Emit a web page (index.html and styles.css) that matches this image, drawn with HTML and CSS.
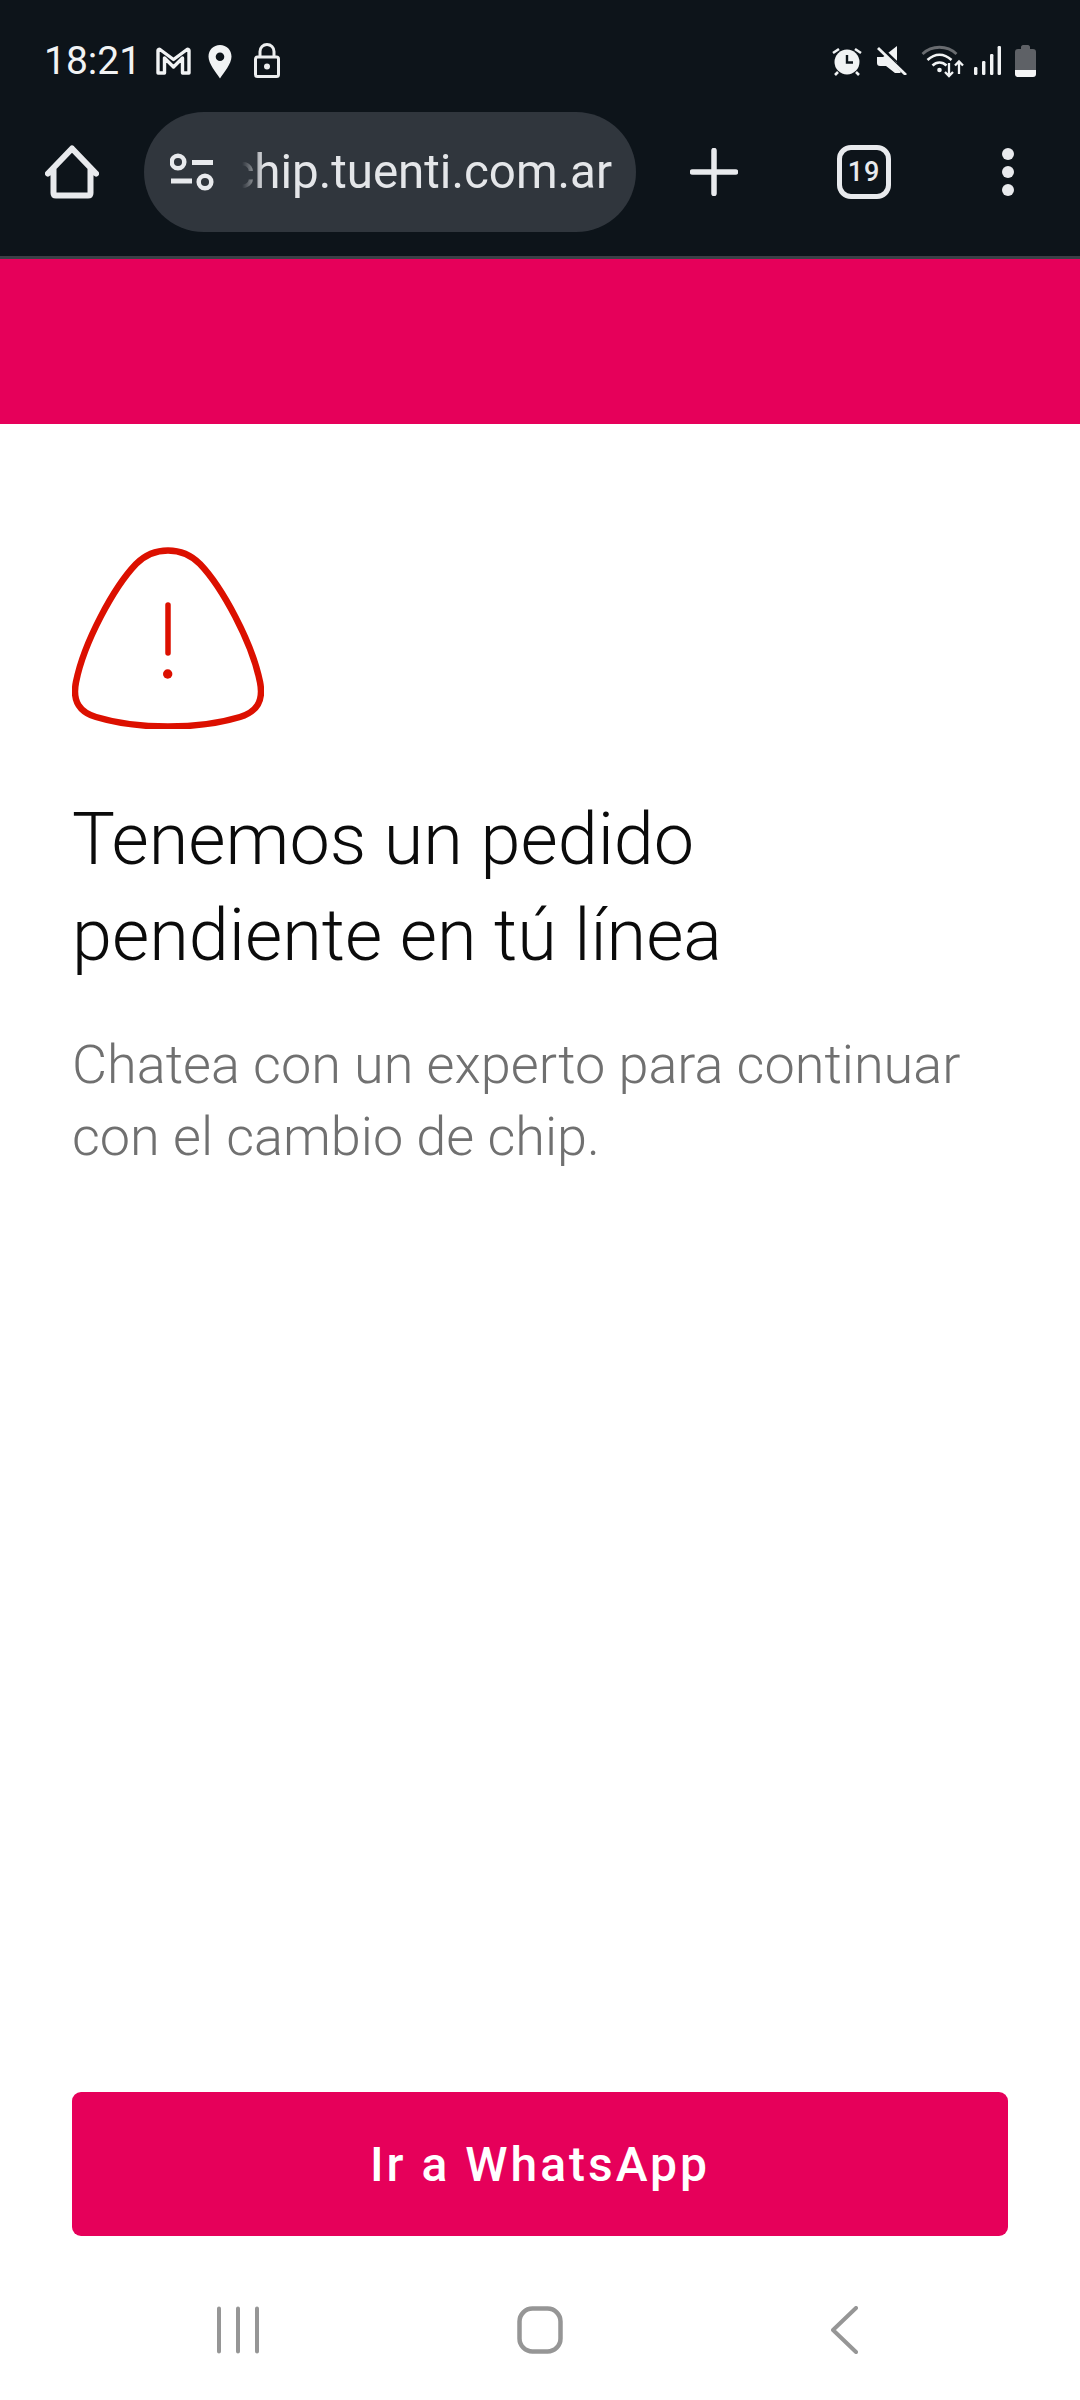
FILE: index.html
```html
<!DOCTYPE html>
<html lang="es">
<head>
<meta charset="utf-8">
<title>Tuenti</title>
<link rel="stylesheet" href="styles.css">
</head>
<body>
<div class="screen">
  <header class="browser">
    <div class="status">
      <div class="status-left">
        <span class="time">18:21</span>
        <svg class="ic-gmail" viewBox="0 0 35 28"><path d="M2 26V3.500c0-1 1-1.600 2-1l13.500 10 13.500-10c1-.6 2 0 2 1V26h-6.500V11L17.500 20 8.500 11V26z" fill="none" stroke="#f1f3f4" stroke-width="3.400" stroke-linejoin="round"/></svg>
        <svg class="ic-pin" viewBox="0 0 24 34"><path fill-rule="evenodd" d="M12 0C5.400 0 .5 5 .5 11.500.5 19 8 27 12 33.500 16 27 23.500 19 23.500 11.500 23.500 5 18.600 0 12 0zm0 7.500a4.300 4.300 0 1 1 0 8.600 4.300 4.300 0 0 1 0-8.600z" fill="#f1f3f4"/></svg>
        <svg class="ic-lock" viewBox="0 0 26 35"><rect x="1.500" y="14" width="23" height="19.500" rx="2" fill="none" stroke="#eceeef" stroke-width="3"/><path d="M6 14V8.500a7 7 0 0 1 14 0V14" fill="none" stroke="#eceeef" stroke-width="3"/><circle cx="13" cy="23.500" r="3" fill="#eceeef"/></svg>
      </div>
      <div class="status-right">
        <svg class="ic-alarm" viewBox="0 0 30 29"><circle cx="15" cy="15" r="12.500" fill="#f1f3f4"/><path d="M15 8v7.500h6" fill="none" stroke="#0d141a" stroke-width="2.400"/><path d="M1 6l6-4M29 6l-6-4M3 28l3-3M27 28l-3-3" stroke="#f1f3f4" stroke-width="2.600" fill="none"/></svg>
        <svg class="ic-mute" viewBox="0 0 30 29"><path d="M0 11h6l3-2 15 17-1 1H18l-9-7H3c-2 0-3-1-3-3z" fill="#f1f3f4"/><path d="M11 7l9-7v17z" fill="#f1f3f4"/><path d="M1 2l28 27" stroke="#f1f3f4" stroke-width="2.800"/><path d="M3.500 0l27 26" stroke="#0d141a" stroke-width="1.500"/></svg>
        <svg class="ic-wifi" viewBox="0 0 44 34"><path d="M1.500 10C11 1 26 1 35.500 10" fill="none" stroke="#696c70" stroke-width="2.800"/><path d="M6.500 16C14 9 23 9 30.500 16" fill="none" stroke="#f1f3f4" stroke-width="2.600"/><path d="M11.500 21.500C15.500 17.500 21.500 17.500 25.500 21.500" fill="none" stroke="#f1f3f4" stroke-width="2.600"/><circle cx="18.500" cy="26" r="2.300" fill="#f1f3f4"/><path d="M28 19v13M24 28l4 4 4-4M38 30V18M34 21.500l4-4 4 4" fill="none" stroke="#f1f3f4" stroke-width="2.300"/></svg>
        <svg class="ic-signal" viewBox="0 0 27 29"><rect x="0" y="21" width="3.400" height="8" rx="1.200" fill="#f1f3f4"/><rect x="8" y="15" width="3.400" height="14" rx="1.200" fill="#f1f3f4"/><rect x="16" y="8" width="3.400" height="21" rx="1.200" fill="#f1f3f4"/><rect x="23.600" y="0" width="3.400" height="29" rx="1.200" fill="#f1f3f4"/></svg>
        <svg class="ic-battery" viewBox="0 0 21 32"><path d="M6 4V2c0-1 1-2 2-2h5c1 0 2 1 2 2v2h3c2 0 3 1 3 3v18H0V7c0-2 1-3 3-3z" fill="#5e6166"/><path d="M0 25h21v4c0 2-1 3-3 3H3c-2 0-3-1-3-3z" fill="#f4f5f6"/></svg>
      </div>
    </div>
    <nav class="toolbar">
      <svg class="ic-home" viewBox="0 0 54 54"><path d="M3 28.500L27 3.500l24 25M8.500 23v25c0 1.700 1 2.500 2.500 2.500h32c1.500 0 2.500-.8 2.500-2.500V23" fill="none" stroke="#e8eaed" stroke-width="6" stroke-linecap="round" stroke-linejoin="round"/></svg>
      <div class="pill">
        <svg class="ic-tune" viewBox="0 0 44 38"><circle cx="8" cy="9" r="6.300" fill="none" stroke="#e8eaed" stroke-width="4.500"/><path d="M22 9.500h21M1 28h21" stroke="#e8eaed" stroke-width="4.800"/><circle cx="35" cy="29" r="6.300" fill="none" stroke="#e8eaed" stroke-width="4.500"/></svg>
        <div class="url"><span>chip.tuenti.com.ar</span></div>
      </div>
      <svg class="ic-plus" viewBox="0 0 48 48"><path d="M24 2.500v43M2.500 24h43" stroke="#e8eaed" stroke-width="5.500" stroke-linecap="round"/></svg>
      <div class="tabs">19</div>
      <div class="dots"><i></i><i></i><i></i></div>
    </nav>
  </header>
  <div class="banner"></div>
  <main class="content">
    <svg class="warn" viewBox="0 0 192 182"><path d="M96 3.500C108 3.500 119 8 128 17C150 40 180 95 188 135C192 155 184 165 168 170C145 177 120 179.500 96 179.500C72 179.500 47 177 24 170C8 165 0 155 4 135C12 95 42 40 64 17C73 8 84 3.500 96 3.500Z" fill="none" stroke="#dc1000" stroke-width="6.500"/><path d="M96 58V106" stroke="#dc1000" stroke-width="5.500" stroke-linecap="round"/><circle cx="95.700" cy="127" r="4.700" fill="#dc1000"/></svg>
    <h1 class="title">Tenemos un pedido<br>pendiente en tú línea</h1>
    <p class="sub">Chatea con un experto para continuar<br>con el cambio de chip.</p>
    <button class="cta">Ir a WhatsApp</button>
  </main>
  <footer class="navbar">
    <svg class="nav-recents" viewBox="0 0 44 48"><path d="M3 2.500v43M22 2.500v43M41 2.500v43" stroke="#969696" stroke-width="4" stroke-linecap="round"/></svg>
    <svg class="nav-home" viewBox="0 0 46 48"><rect x="2.500" y="2.500" width="41" height="43" rx="13" fill="none" stroke="#969696" stroke-width="4.500"/></svg>
    <svg class="nav-back" viewBox="0 0 27 48"><path d="M25 2L2 24l23 22" fill="none" stroke="#969696" stroke-width="4" stroke-linecap="round" stroke-linejoin="round"/></svg>
  </footer>
</div>
</body>
</html>
```

FILE: styles.css
```css
* { box-sizing: border-box; }
html, body { margin: 0; padding: 0; background: #fff; }
svg { display: block; flex: none; }
.screen {
  width: 1080px;
  height: 2400px;
  display: flex;
  flex-direction: column;
  font-family: Roboto, "Liberation Sans", sans-serif;
  overflow: hidden;
}
.browser {
  height: 259px;
  background: #0d141a;
  border-bottom: 3px solid #3b3f46;
  display: flex;
  flex-direction: column;
}
.status {
  height: 112px;
  padding: 43px 44px 0 44px;
  display: flex;
  justify-content: space-between;
  align-items: flex-start;
}
.status-left { display: flex; align-items: flex-start; }
.status-right { display: flex; align-items: flex-start; padding-top: 1px; }
.time {
  font-size: 39px;
  line-height: 36px;
  color: #f1f3f4;
  width: 112px;
}
.ic-gmail { width: 35px; height: 28px; margin-top: 4px; }
.ic-pin { width: 24px; height: 34px; margin: 2px 0 0 17px; }
.ic-lock { width: 26px; height: 35px; margin: 0 0 0 22px; }
.ic-alarm { width: 30px; height: 29px; margin-top: 3px; }
.ic-mute { width: 30px; height: 29px; margin: 2px 0 0 15px; }
.ic-wifi { width: 44px; height: 34px; margin-left: 14px; }
.ic-signal { width: 27px; height: 29px; margin: 2px 0 0 9px; }
.ic-battery { width: 21px; height: 32px; margin: 1px 0 0 14px; }
.toolbar {
  height: 120px;
  padding-left: 45px;
  display: flex;
  align-items: center;
}
.ic-home { width: 54px; height: 54px; }
.pill {
  width: 492px;
  height: 120px;
  margin-left: 45px;
  border-radius: 60px;
  background: #30363d;
  display: flex;
  align-items: center;
  padding-left: 26px;
}
.ic-tune { width: 44px; height: 38px; }
.url {
  width: 378px;
  margin-left: 20px;
  overflow: hidden;
  display: flex;
  justify-content: flex-end;
  font-size: 47.500px;
  line-height: 60px;
  color: #e4e6e9;
  white-space: nowrap;
  -webkit-mask-image: linear-gradient(to right, transparent 8px, rgba(0,0,0,.25) 14px, #000 30px);
  mask-image: linear-gradient(to right, transparent 8px, rgba(0,0,0,.25) 14px, #000 30px);
}
.ic-plus { width: 48px; height: 48px; margin-left: 54px; }
.tabs {
  width: 54px;
  height: 54px;
  margin-left: 99px;
  border: 5px solid #e8eaed;
  border-radius: 14px;
  color: #e8eaed;
  font-size: 27px;
  font-weight: 500;
  letter-spacing: 1px;
  display: flex;
  align-items: center;
  justify-content: center;
}
.dots {
  margin-left: 111px;
  display: flex;
  flex-direction: column;
  gap: 6px;
}
.dots i { display: block; width: 12px; height: 12px; border-radius: 50%; background: #e8eaed; }
.banner { height: 165px; background: #e6005a; }
.content {
  flex: 1;
  padding: 123px 72px 0;
  display: flex;
  flex-direction: column;
}
.warn { width: 192px; height: 182px; }
.title {
  margin: 63px 0 0;
  font-size: 72px;
  line-height: 96px;
  font-weight: 300;
  color: #0b0b0b;
}
.sub {
  margin: 45px 0 0;
  font-size: 54px;
  line-height: 72px;
  font-weight: 300;
  color: #707070;
}
.cta {
  margin-top: auto;
  height: 144px;
  border: 0;
  border-radius: 9px;
  background: #e6005a;
  color: #fff;
  font-family: inherit;
  font-size: 48px;
  font-weight: 500;
  letter-spacing: 3px;
}
.navbar {
  height: 164px;
  display: flex;
  padding-top: 70px;
  align-items: flex-start;
}
.nav-recents { width: 44px; height: 48px; margin-left: 216px; }
.nav-home { width: 46px; height: 48px; margin-left: 257px; }
.nav-back { width: 27px; height: 48px; margin-left: 268px; }
```
